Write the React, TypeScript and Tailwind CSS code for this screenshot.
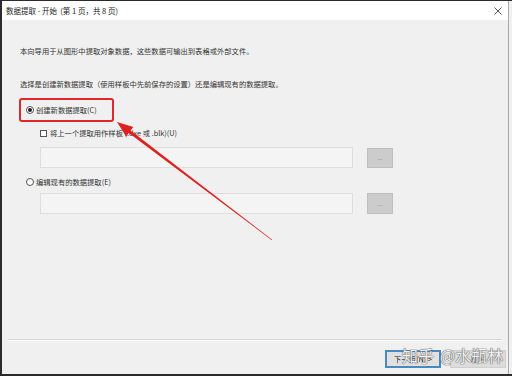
import React from "react";

const font = { fontFamily: '"Noto Sans CJK SC", "Liberation Sans", sans-serif' };

export default function App() {
  return (
    <div className="relative w-[512px] h-[376px] bg-[#2b2b2b] pt-[1px] pl-[2px] pb-[2px] overflow-hidden" style={font}>
      <div className="flex h-full">
        <div className="flex flex-col w-[507px] h-full bg-[#f0f0f0] border-r border-[#a8a8a8]">
          {/* title bar */}
          <div className="flex items-center justify-between h-[19px] bg-white pl-[4px] pr-[6px]">
            <span className="text-[7.5px] leading-[10px] text-[#222]">数据提取 - 开始&nbsp;&nbsp;(第 1 页，共 8 页)</span>
            <svg width="8" height="8" viewBox="0 0 8 8" className="mt-[1px]">
              <path d="M0.5 0.5 L7.5 7.5 M7.5 0.5 L0.5 7.5" stroke="#444" strokeWidth="0.9" />
            </svg>
          </div>
          {/* body */}
          <div className="flex flex-col flex-1 text-[7.3px] leading-[10px] text-[#333]">
            <div className="mt-[26px] pl-[18px]">本向导用于从图形中提取对象数据，这些数据可输出到表格或外部文件。</div>
            <div className="mt-[23px] pl-[18px]">选择是创建新数据提取（使用样板中先前保存的设置）还是编辑现有的数据提取。</div>
            <div className="mt-[16px] flex items-center pl-[24px] h-[10px]">
              <div className="w-[8px] h-[8px] rounded-full border border-[#555] bg-white flex items-center justify-center">
                <div className="w-[4px] h-[4px] rounded-full bg-[#222]" />
              </div>
              <span className="ml-[2px]">创建新数据提取(C)</span>
            </div>
            <div className="mt-[13px] flex items-center pl-[38px] h-[10px]">
              <div className="w-[7px] h-[7px] border border-[#555] bg-white" />
              <span className="ml-[3px]">将上一个提取用作样板 (.dxe 或 .blk)(U)</span>
            </div>
            <div className="mt-[9px] flex items-center pl-[38px]">
              <div className="w-[313px] h-[21px] bg-[#f4f4f4] border border-[#dedede]" />
              <div className="ml-[14px] w-[26px] h-[20px] bg-[#cccccc] border border-[#c0c0c0] flex items-center justify-center text-[6px] text-[#888]">...</div>
            </div>
            <div className="mt-[9px] flex items-center pl-[24px] h-[10px]">
              <div className="w-[8px] h-[8px] rounded-full border border-[#555] bg-white" />
              <span className="ml-[2px]">编辑现有的数据提取(E)</span>
            </div>
            <div className="mt-[6px] flex items-center pl-[38px]">
              <div className="w-[313px] h-[21px] bg-[#f4f4f4] border border-[#dedede]" />
              <div className="ml-[14px] w-[26px] h-[21px] bg-[#cccccc] border border-[#c0c0c0] flex items-center justify-center text-[6px] text-[#888]">...</div>
            </div>
            <div className="flex-1" />
            <div className="mx-[6px] h-[2px] border-t border-[#d6d6d6] border-b border-b-white" />
            <div className="mt-[9px] mb-[6px] flex justify-end gap-[9px] pr-[2px]">
              <div className="w-[56px] h-[18px] bg-[#e1e1e1] border-2 border-[#4a88c0] flex items-center justify-center text-[#222]">下一步(N) &gt;</div>
              <div className="w-[56px] h-[18px] bg-[#dcdcdc] border border-[#cfcfcf] flex items-center justify-center text-[#666]">取消</div>
            </div>
          </div>
        </div>
        <div className="flex-1 bg-[#f0f0f0]" />
      </div>

      {/* red highlight */}
      <div className="absolute left-[19px] top-[98px] w-[95px] h-[24px] border-2 border-[#e3262b] rounded-[3px]" />

      {/* arrow */}
      <svg className="absolute left-0 top-0" width="512" height="376" viewBox="0 0 512 376">
        <polygon points="117,122 126.1,136.5 128.8,132.9 271.8,240.2 272.2,239.8 130.6,130.5 133.3,126.9" fill="#e0201f" />
      </svg>

      {/* watermark */}
      <div className="absolute left-[402px] top-[345px] flex items-center gap-[6px] text-[16px] leading-[20px] text-white/90 [text-shadow:0_0_1px_#666,0_0_1px_#666,0_0_1px_#666]" style={font}>
        <span>知乎</span>
        <span>@水瓶林</span>
      </div>
    </div>
  );
}
